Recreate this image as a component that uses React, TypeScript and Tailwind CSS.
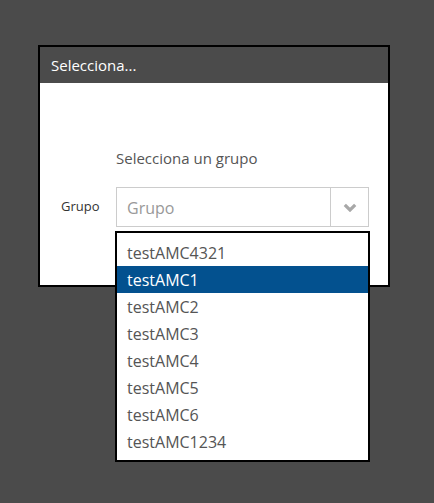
const items = ["testAMC4321", "testAMC1", "testAMC2", "testAMC3", "testAMC4", "testAMC5", "testAMC6", "testAMC1234"]

export default function App() {
    return (
        <div
            className="h-[503px] w-[434px] bg-[#4b4b4b] pl-[38px] pt-[45px]"
            style={{ fontFamily: '"Open Sans", "Noto Sans", sans-serif' }}
        >
            <div className="w-[352px] border-2 border-black bg-white">
                <div className="flex h-[36px] items-center bg-[#4b4b4b] pl-[11px] text-[15px] text-white">
                    Selecciona...
                </div>
                <div className="h-[202px] pt-[65px]">
                    <div className="pl-[76px] text-[15px] leading-[20px] text-[#555]">Selecciona un grupo</div>
                    <div className="mt-[19px] flex items-center">
                        <div className="w-[76px] pl-[21px] text-[13px] text-[#333]">Grupo</div>
                        <div className="relative flex h-[40px] w-[253px] items-center border border-[#ccc]">
                            <div className="flex-1 pl-[10px] pt-px text-[16px] text-[#999]">Grupo</div>
                            <div className="flex h-full w-[38px] items-center justify-center border-l border-[#ccc] pt-px">
                                <svg width="14" height="9" viewBox="0 0 14 9">
                                    <polyline
                                        points="1.8,1.8 7,7 12.2,1.8"
                                        fill="none"
                                        stroke="#a8a8a8"
                                        strokeWidth="3.2"
                                    />
                                </svg>
                            </div>
                            <div className="absolute left-[-2px] top-[43px] w-[255px] border-2 border-black bg-white pb-[5px] pt-[6px]">
                                {items.map((item, i) => (
                                    <div
                                        key={item}
                                        className={
                                            i === 1
                                                ? "flex h-[27px] items-center bg-[#03518f] pl-[10px] text-[16px] text-white"
                                                : "flex h-[27px] items-center pl-[10px] text-[16px] text-[#555]"
                                        }
                                    >
                                        {item}
                                    </div>
                                ))}
                            </div>
                        </div>
                    </div>
                </div>
            </div>
        </div>
    )
}
